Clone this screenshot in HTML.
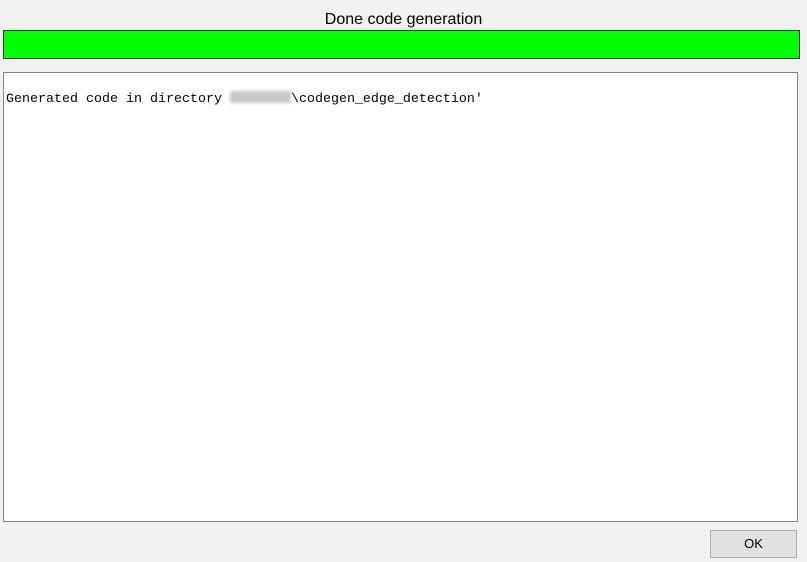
<!DOCTYPE html>
<html><head><meta charset="utf-8"><style>
html,body{margin:0;padding:0;}
body{width:807px;height:562px;background:#f0f0f0;position:relative;overflow:hidden;font-family:"Liberation Sans",sans-serif;}
.title{position:absolute;left:0;width:807px;top:11px;text-align:center;font-size:16px;color:#000;}
.bar{position:absolute;left:3px;top:30px;width:795px;height:27px;background:#00ff00;border:1px solid #3a3a3a;}
.box{position:absolute;left:3px;top:72px;width:793px;height:448px;background:#fff;border:1px solid #828790;}
.txt{position:absolute;left:2px;top:18px;font-family:"Liberation Mono",monospace;font-size:13.33px;color:#000;white-space:pre;}
.blur{display:inline-block;width:61px;height:12px;background:#c8c8c8;filter:blur(1.5px);vertical-align:-1px;}
.ok{position:absolute;left:710px;top:530px;width:85px;height:26px;background:#e1e1e1;border:1px solid #adadad;text-align:center;line-height:26px;font-size:13px;}
</style></head><body>
<div class="title">Done code generation</div>
<div class="bar"></div>
<div class="box"><div class="txt">Generated code in directory <span class="blur"></span>\codegen_edge_detection'</div></div>
<div class="ok">OK</div>
</body></html>
